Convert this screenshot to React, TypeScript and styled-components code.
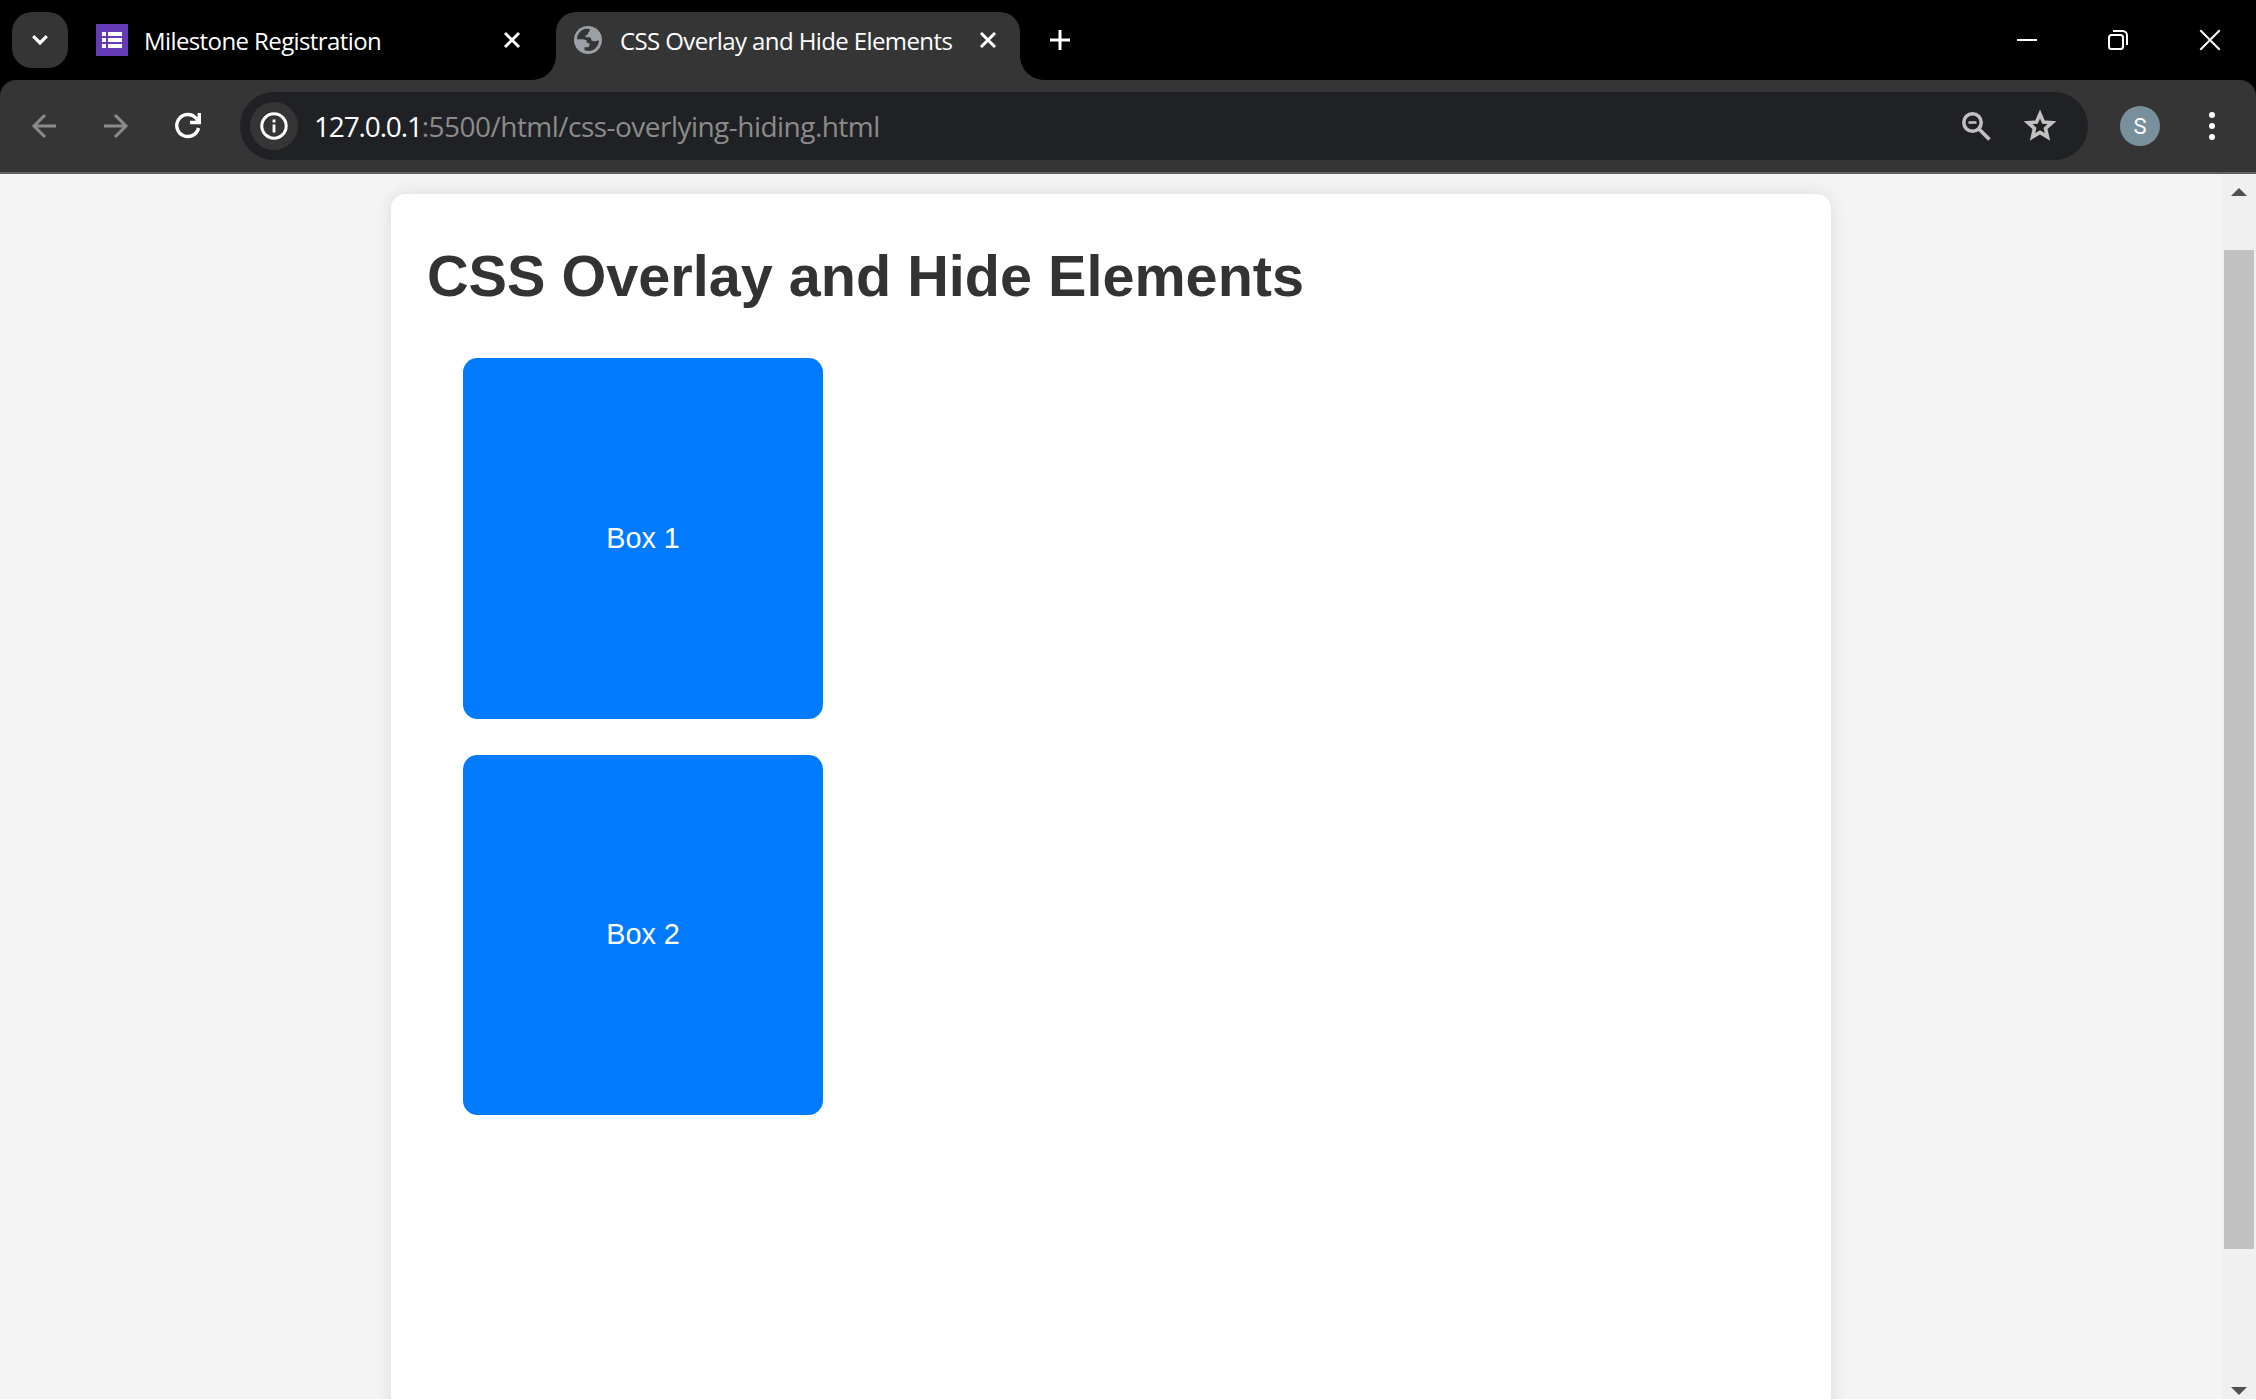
import React from "react";
import styled, { createGlobalStyle } from "styled-components";

const GlobalStyle = createGlobalStyle`
  * { box-sizing: border-box; }
  html, body { margin: 0; padding: 0; background: #f4f4f4; overflow: hidden; }
`;

const uiFont = `"Open Sans", "Noto Sans", sans-serif`;

const Window = styled.div`
  width: 2256px;
  height: 1400px;
  display: flex;
  flex-direction: column;
  background: #000;
  border-bottom: 1px solid #fff;
  overflow: hidden;
`;

const TabStrip = styled.header`
  flex: none;
  height: 80px;
  padding: 12px 0 0 12px;
  display: flex;
`;

const TabSearch = styled.button`
  flex: none;
  width: 56px;
  height: 56px;
  padding: 0;
  border: 0;
  border-radius: 20px;
  background: #353535;
  display: flex;
  align-items: center;
  justify-content: center;
`;

const Tab = styled.div<{ $active?: boolean }>`
  flex: none;
  position: relative;
  width: 464px;
  height: 68px;
  margin-left: 12px;
  padding: 0 24px 12px 16px;
  display: flex;
  align-items: center;
  color: #fff;
  border-radius: 20px 20px 0 0;
  background: ${(p) => (p.$active ? "#353535" : "transparent")};

  &::before,
  &::after {
    content: "";
    display: ${(p) => (p.$active ? "block" : "none")};
    position: absolute;
    bottom: 0;
    width: 24px;
    height: 24px;
  }
  &::before {
    left: -24px;
    background: radial-gradient(circle at 0 0, transparent 23.5px, #353535 24.2px);
  }
  &::after {
    right: -24px;
    background: radial-gradient(circle at 100% 0, transparent 23.5px, #353535 24.2px);
  }
`;

const TabTitle = styled.span`
  flex: 1;
  margin-left: 16px;
  padding-top: 2px;
  font: 400 24px/32px ${uiFont};
  letter-spacing: -0.6px;
  white-space: nowrap;
`;

const Icon = styled.svg`
  display: block;
  flex: none;
  overflow: visible;
`;

const NewTab = styled.div`
  margin-left: 30px;
  height: 56px;
  display: flex;
  align-items: center;
`;

const WindowControls = styled.div`
  margin-left: auto;
  height: 56px;
  padding-right: 36px;
  display: grid;
  grid-template-columns: 91px 92px 20px;
  align-items: center;
`;

const Toolbar = styled.nav`
  flex: none;
  height: 94px;
  padding: 0 41px 0 28px;
  display: flex;
  align-items: center;
  background: #353535;
  border-bottom: 2px solid #606060;
  border-radius: 16px 16px 0 0;
`;

const NavButtons = styled.div`
  display: flex;
  gap: 40px;
  margin-right: 36px;
`;

const AddressBar = styled.div`
  width: 1848px;
  height: 68px;
  padding: 0 28px 0 10px;
  display: flex;
  align-items: center;
  background: #202124;
  border-radius: 34px;
`;

const SiteInfo = styled.div`
  flex: none;
  width: 48px;
  height: 48px;
  border-radius: 50%;
  background: #353535;
  display: flex;
  align-items: center;
  justify-content: center;
`;

const Url = styled.div`
  flex: 1;
  margin-left: 16px;
  font: 400 28px/40px ${uiFont};
  letter-spacing: -0.53px;
  color: #8b8b8b;
  white-space: nowrap;
`;

const Host = styled.span`
  letter-spacing: -1.15px;
  color: #fff;
`;

const AddressActions = styled.div`
  display: flex;
  align-items: center;
  gap: 26px;
`;

const Avatar = styled.div`
  flex: none;
  width: 40px;
  height: 40px;
  margin: 0 auto 0 32px;
  border-radius: 50%;
  background: #78909c;
  color: #fff;
  font: 400 22px/41px Roboto, sans-serif;
  text-align: center;
`;

const Viewport = styled.div`
  flex: 1;
  min-height: 0;
  display: flex;
  background: #f4f4f4;
`;

const Page = styled.main`
  flex: 1;
  overflow: hidden;
  padding-top: 20px;
  display: flex;
  justify-content: center;
`;

const Card = styled.section`
  width: 1440px;
  height: 1400px;
  padding: 36px;
  background: #fff;
  border-radius: 14.4px;
  box-shadow: 0 0 18px rgba(0, 0, 0, 0.1);
  font-family: "Liberation Sans", Arial, sans-serif;
`;

const Title = styled.h1`
  margin: 11px 0 47px;
  font-size: 57.6px;
  line-height: 70px;
  font-weight: 700;
  color: #333;
  white-space: nowrap;
`;

const Boxes = styled.div`
  margin-left: 36px;
  display: flex;
  flex-direction: column;
  gap: 36px;
`;

const Box = styled.div`
  width: 360px;
  height: 360.5px;
  display: flex;
  align-items: center;
  justify-content: center;
  background: #007bff;
  border-radius: 14.4px;
  color: #fff;
  font-size: 28.8px;
`;

const Scrollbar = styled.aside`
  flex: none;
  width: 34px;
  padding: 14px 2px 4px;
  display: flex;
  flex-direction: column;
  align-items: center;
  background: #f0f0f0;
`;

const Thumb = styled.div`
  width: 30px;
  height: 999px;
  margin: 54px 0 auto;
  background: #c1c1c1;
`;

const CloseIcon = () => (
  <Icon width="16" height="16" viewBox="0 0 16 16" stroke="#fff" strokeWidth="3" fill="none">
    <path d="M1 1L15 15M15 1L1 15" />
  </Icon>
);

export default function App() {
  return (
    <Window>
      <GlobalStyle />
      <TabStrip>
        <TabSearch>
          <Icon width="16" height="10" viewBox="0 0 16 10" fill="none" stroke="#fff" strokeWidth="3.2">
            <path d="M1.2 1.2L8 8L14.8 1.2" />
          </Icon>
        </TabSearch>
        <Tab>
          <Icon width="32" height="32" viewBox="0 0 32 32">
            <rect width="32" height="32" rx="1" fill="#673ab7" />
            <path
              fill="#fff"
              d="M6 8h4v4H6zM12 8h14v4H12zM6 14h4v4H6zM12 14h14v4H12zM6 20h4v4H6zM12 20h14v4H12z"
            />
          </Icon>
          <TabTitle>Milestone Registration</TabTitle>
          <CloseIcon />
        </Tab>
        <Tab $active>
          <Icon width="32" height="32" viewBox="-2 -2 32 32">
            <circle cx="14" cy="14" r="14" fill="#9aa0a6" />
            <path
              fill="#353535"
              d="M3 13.300C3 8 7 3.200 12.500 2.800L15.600 3C16.200 4.500 15.600 5.800 14.300 6.200L14 8.200L11.600 9.300V11.200H15C17 11.400 17.300 12.500 17.500 14.500C19.500 15.600 22 15.400 24.900 14.200C24.900 20 20.500 25 14.500 25L10.500 24.300V21.300H14.200L15.500 19.800V17.300L12.800 17V14.800C11.600 13.700 9.500 13.300 3 13.300Z"
            />
          </Icon>
          <TabTitle>CSS Overlay and Hide Elements</TabTitle>
          <CloseIcon />
        </Tab>
        <NewTab>
          <Icon width="20" height="20" viewBox="0 0 20 20" stroke="#fff" strokeWidth="3">
            <path d="M10 0V20M0 10H20" />
          </Icon>
        </NewTab>
        <WindowControls>
          <Icon width="20" height="20" viewBox="0 0 20 20" stroke="#fff" strokeWidth="2">
            <path d="M0 10H20" />
          </Icon>
          <Icon width="20" height="20" viewBox="0 0 20 20" stroke="#fff" strokeWidth="2" fill="none">
            <rect x="1" y="5" width="14" height="14" rx="2.5" />
            <path d="M5 1H14.5A4.5 4.5 0 0 1 19 5.500V15" />
          </Icon>
          <Icon width="20" height="20" viewBox="0 0 20 20" stroke="#fff" strokeWidth="2">
            <path d="M.3 .3L19.700 19.700M19.700 .3L.3 19.700" />
          </Icon>
        </WindowControls>
      </TabStrip>

      <Toolbar>
        <NavButtons>
          <Icon width="32" height="32" viewBox="0 0 32 32" fill="none" stroke="#8b8b8b" strokeWidth="3">
            <path d="M17 5L6 16L17 27M6 16H28" />
          </Icon>
          <Icon width="32" height="32" viewBox="0 0 32 32" fill="none" stroke="#8b8b8b" strokeWidth="3">
            <path d="M15 5L26 16L15 27M26 16H4" />
          </Icon>
          <Icon width="32" height="32" viewBox="0 0 32 32" fill="none" stroke="#fff" strokeWidth="3.4">
            <path d="M26.500 18A11 11 0 1 1 24 8.200L27 12M27.300 3V12.500H18" />
          </Icon>
        </NavButtons>
        <AddressBar>
          <SiteInfo>
            <Icon width="28" height="28" viewBox="0 0 28 28">
              <circle cx="14" cy="14" r="12.200" fill="none" stroke="#fff" strokeWidth="3" />
              <path fill="#fff" d="M12.600 12.500h2.800v8h-2.800zM12.600 7.500h2.800v2.900h-2.800z" />
            </Icon>
          </SiteInfo>
          <Url>
            <Host>127.0.0.1</Host>:5500/html/css-overlying-hiding.html
          </Url>
          <AddressActions>
            <Icon width="36" height="36" viewBox="0 0 36 36" fill="none" stroke="#c0c0c0">
              <circle cx="14.500" cy="14.500" r="8.700" strokeWidth="3.600" />
              <path d="M20.500 20.500L31.500 31.500" strokeWidth="3.800" />
              <path d="M10.500 14.500H18.500" strokeWidth="2.600" />
            </Icon>
            <Icon width="40" height="40" viewBox="-20 -20 40 40" fill="none" stroke="#c0c0c0" strokeWidth="3.600">
              <path d="M0 -12L3.400 -4L12 -3.300L5.500 2.400L7.500 10.900L0 6.400L-7.500 10.900L-5.500 2.400L-12 -3.300L-3.400 -4Z" />
            </Icon>
          </AddressActions>
        </AddressBar>
        <Avatar>S</Avatar>
        <Icon width="6" height="28" viewBox="0 0 6 28" fill="#fff">
          <circle cx="3" cy="3" r="3" />
          <circle cx="3" cy="14" r="3" />
          <circle cx="3" cy="25" r="3" />
        </Icon>
      </Toolbar>

      <Viewport>
        <Page>
          <Card>
            <Title>CSS Overlay and Hide Elements</Title>
            <Boxes>
              <Box>Box 1</Box>
              <Box>Box 2</Box>
            </Boxes>
          </Card>
        </Page>
        <Scrollbar>
          <Icon width="16" height="8" viewBox="0 0 16 8" fill="#505050">
            <path d="M0 8L8 0L16 8Z" />
          </Icon>
          <Thumb />
          <Icon width="16" height="8" viewBox="0 0 16 8" fill="#505050">
            <path d="M0 0H16L8 8Z" />
          </Icon>
        </Scrollbar>
      </Viewport>
    </Window>
  );
}
